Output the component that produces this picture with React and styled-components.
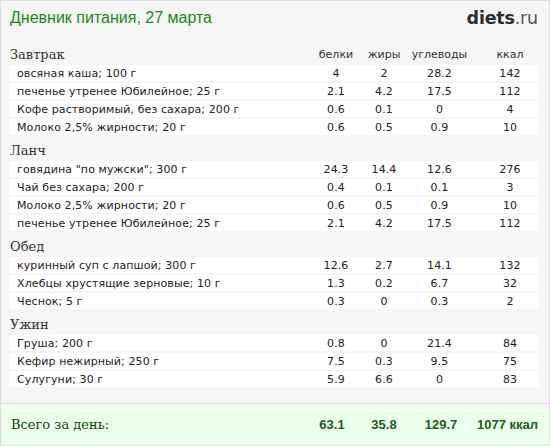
import React from "react";
import styled, { createGlobalStyle } from "styled-components";

const GlobalStyle = createGlobalStyle`
  html, body { margin: 0; padding: 0; background: #ffffff; }
  * { box-sizing: border-box; }
`;

const COLS = "minmax(0, 1fr) 48px 48px 63px 67px";

const Frame = styled.div`
  width: 550px;
  height: 446px;
  border: 1px solid #dcdcdc;
  background: #f6f6f6;
  display: flex;
  flex-direction: column;
  overflow: hidden;
`;

const TopBar = styled.div`
  height: 40px;
  display: flex;
  justify-content: space-between;
  align-items: flex-start;
  padding: 6px 11px 0 9px;
`;

const Title = styled.div`
  font-family: "Liberation Sans", Arial, sans-serif;
  font-size: 16px;
  line-height: 22px;
  color: #178a17;
`;

const Logo = styled.div`
  font-family: "DejaVu Sans", sans-serif;
  font-size: 17.5px;
  line-height: 22px;
  color: #333;
  letter-spacing: -0.2px;
  b { font-weight: 700; color: #2e2e2e; }
  span { font-weight: 400; color: #555; }
`;

const Content = styled.div`
  flex: 1;
  padding: 0 11px 0 8px;
`;

const SectionHead = styled.div`
  height: 24px;
  display: grid;
  grid-template-columns: ${COLS};
  align-items: end;
`;

const SectionTitle = styled.div`
  font-family: "DejaVu Serif", Georgia, serif;
  font-size: 13px;
  line-height: 20px;
  color: #333;
  padding-left: 1px;
`;

const ColLabel = styled.div`
  font-family: "DejaVu Sans", Verdana, sans-serif;
  font-size: 11px;
  line-height: 20px;
  color: #333;
  text-align: center;
  white-space: nowrap;
  padding-left: ${(p) => (p.$pad ? p.$pad : 0)}px;
`;

const Row = styled.div`
  height: 16px;
  margin-bottom: 2px;
  background: #ffffff;
  display: grid;
  grid-template-columns: ${COLS};
  align-items: center;
  font-family: "DejaVu Sans", Verdana, sans-serif;
  font-size: 11px;
  letter-spacing: 0.1px;
  color: #222;
`;

const Name = styled.div`
  padding-left: 8px;
  white-space: nowrap;
  overflow: hidden;
`;

const Num = styled.div`
  text-align: center;
  white-space: nowrap;
  padding-left: ${(p) => (p.$pad ? p.$pad : 0)}px;
`;

const Totals = styled.div`
  height: 42px;
  border-top: 1px solid #dadada;
  background: #ebffeb;
  display: grid;
  grid-template-columns: ${COLS};
  align-items: center;
  padding: 0 11px 0 9px;
`;

const TotalLabel = styled.div`
  font-family: "DejaVu Serif", Georgia, serif;
  font-size: 13px;
  color: #0a4d0a;
  padding-left: 1px;
`;

const TotalNum = styled.div`
  font-family: "Liberation Sans", Arial, sans-serif;
  font-weight: 700;
  font-size: 13px;
  color: #1d5e1d;
  text-align: ${(p) => (p.$right ? "right" : "center")};
  white-space: nowrap;
  margin-left: ${(p) => (p.$shift ? p.$shift : 0)}px;
`;

const sections = [
  {
    title: "Завтрак",
    labels: true,
    rows: [
      ["овсяная каша; 100 г", "4", "2", "28.2", "142"],
      ["печенье утренее Юбилейное; 25 г", "2.1", "4.2", "17.5", "112"],
      ["Кофе растворимый, без сахара; 200 г", "0.6", "0.1", "0", "4"],
      ["Молоко 2,5% жирности; 20 г", "0.6", "0.5", "0.9", "10"],
    ],
  },
  {
    title: "Ланч",
    rows: [
      ['говядина "по мужски"; 300 г', "24.3", "14.4", "12.6", "276"],
      ["Чай без сахара; 200 г", "0.4", "0.1", "0.1", "3"],
      ["Молоко 2,5% жирности; 20 г", "0.6", "0.5", "0.9", "10"],
      ["печенье утренее Юбилейное; 25 г", "2.1", "4.2", "17.5", "112"],
    ],
  },
  {
    title: "Обед",
    rows: [
      ["куринный суп с лапшой; 300 г", "12.6", "2.7", "14.1", "132"],
      ["Хлебцы хрустящие зерновые; 10 г", "1.3", "0.2", "6.7", "32"],
      ["Чеснок; 5 г", "0.3", "0", "0.3", "2"],
    ],
  },
  {
    title: "Ужин",
    rows: [
      ["Груша; 200 г", "0.8", "0", "21.4", "84"],
      ["Кефир нежирный; 250 г", "7.5", "0.3", "9.5", "75"],
      ["Сулугуни; 30 г", "5.9", "6.6", "0", "83"],
    ],
  },
];

export default function App() {
  return (
    <>
      <GlobalStyle />
      <Frame>
        <TopBar>
          <Title>Дневник питания, 27 марта</Title>
          <Logo>
            <b>diets</b>
            <span>.ru</span>
          </Logo>
        </TopBar>
        <Content>
          {sections.map((s) => (
            <div key={s.title}>
              <SectionHead>
                <SectionTitle>{s.title}</SectionTitle>
                {s.labels && (
                  <>
                    <ColLabel>белки</ColLabel>
                    <ColLabel>жиры</ColLabel>
                    <ColLabel>углеводы</ColLabel>
                    <ColLabel $pad={11}>ккал</ColLabel>
                  </>
                )}
              </SectionHead>
              {s.rows.map((r, i) => (
                <Row key={i}>
                  <Name>{r[0]}</Name>
                  <Num>{r[1]}</Num>
                  <Num>{r[2]}</Num>
                  <Num>{r[3]}</Num>
                  <Num $pad={11}>{r[4]}</Num>
                </Row>
              ))}
            </div>
          ))}
        </Content>
        <Totals>
          <TotalLabel>Всего за день:</TotalLabel>
          <TotalNum $shift={-8}>63.1</TotalNum>
          <TotalNum>35.8</TotalNum>
          <TotalNum $shift={3}>129.7</TotalNum>
          <TotalNum $right>1077 ккал</TotalNum>
        </Totals>
      </Frame>
    </>
  );
}
